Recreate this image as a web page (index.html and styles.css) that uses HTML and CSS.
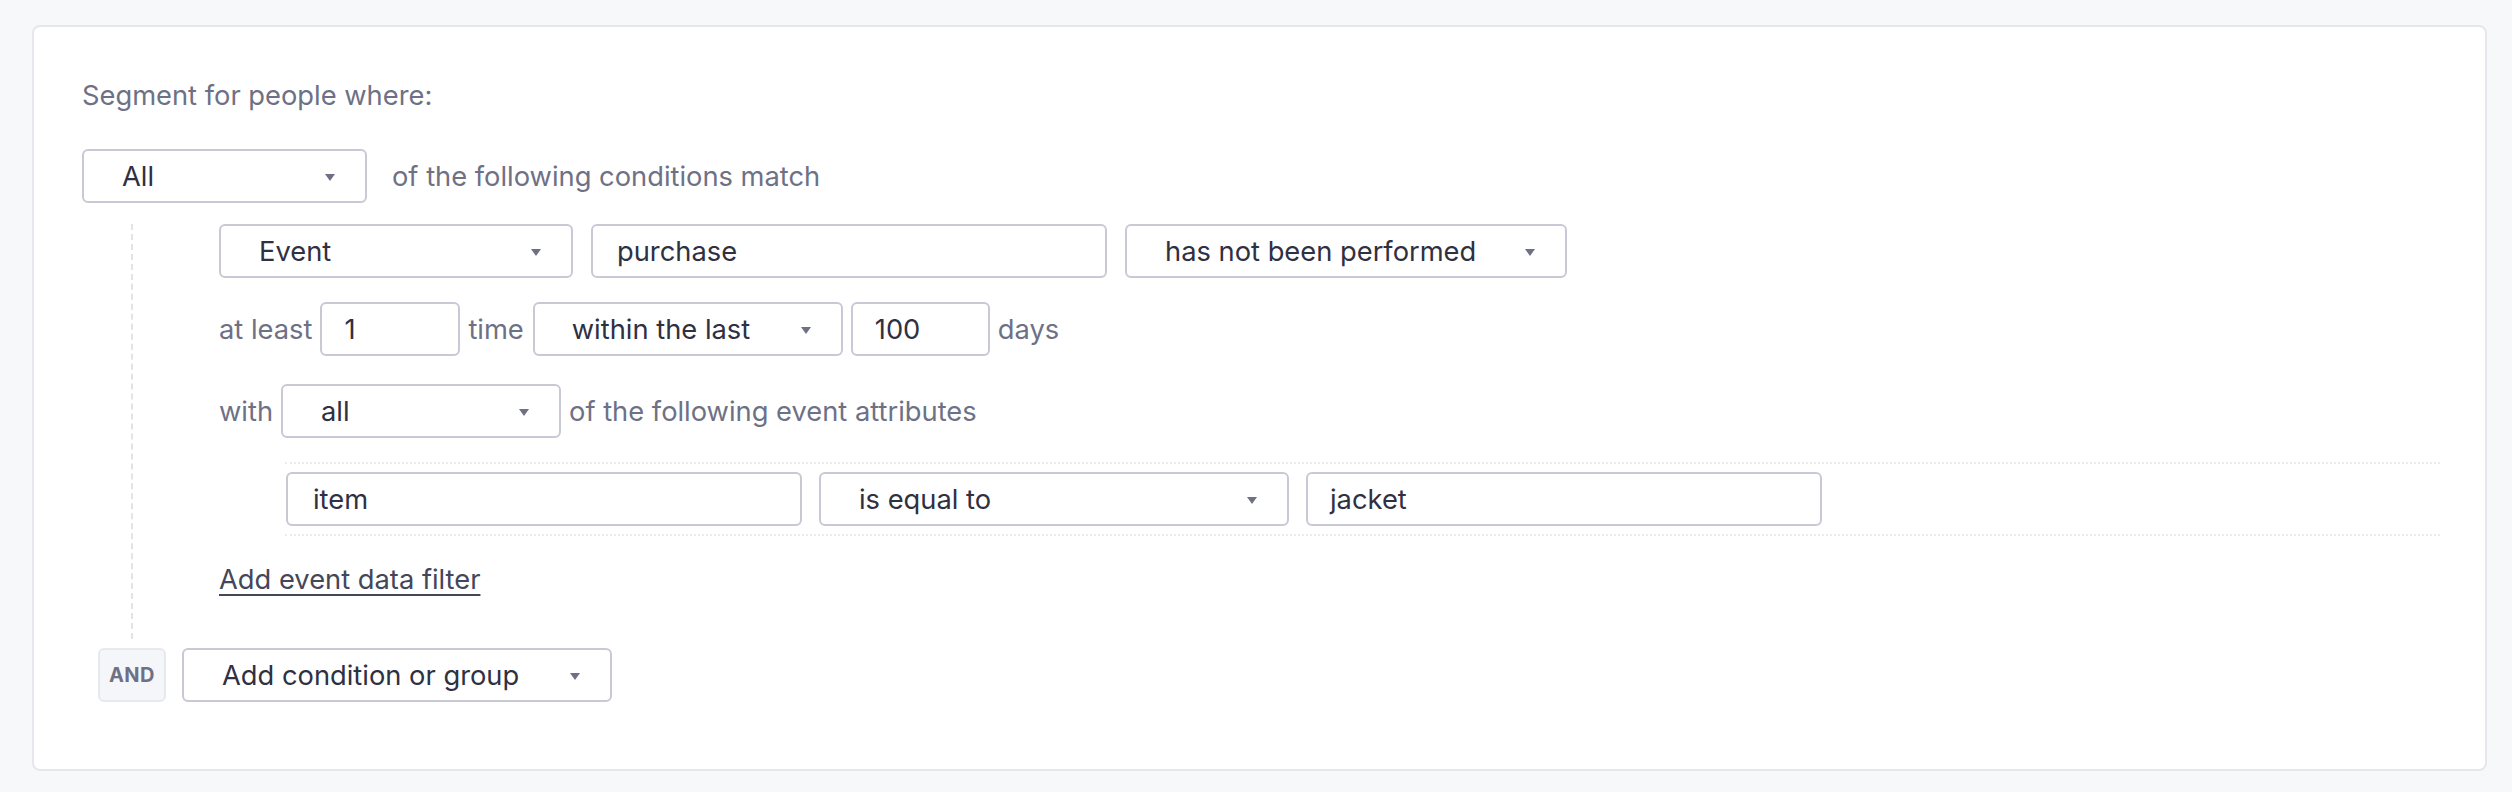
FILE: index.html
```html
<!DOCTYPE html>
<html>
<head>
<meta charset="utf-8">
<link rel="stylesheet" href="styles.css">
</head>
<body>
<div class="card">
  <div class="title">Segment for people where:</div>
  <div class="row top-row">
    <div class="select w-all"><span>All</span><i class="caret"></i></div>
    <span class="label gap-wide">of the following conditions match</span>
  </div>
  <div class="group">
    <div class="row r-event">
      <div class="select w-event"><span>Event</span><i class="caret"></i></div>
      <div class="input w-purchase">purchase</div>
      <div class="select w-performed"><span>has not been performed</span><i class="caret"></i></div>
    </div>
    <div class="row r-least">
      <span class="label">at least</span>
      <div class="input w-one">1</div>
      <span class="label">time</span>
      <div class="select w-within"><span>within the last</span><i class="caret"></i></div>
      <div class="input w-hundred">100</div>
      <span class="label">days</span>
    </div>
    <div class="row r-with">
      <span class="label">with</span>
      <div class="select w-allattr"><span>all</span><i class="caret"></i></div>
      <span class="label">of the following event attributes</span>
    </div>
    <div class="filters">
      <div class="row r-filter">
        <div class="input w-item">item</div>
        <div class="select w-equal"><span>is equal to</span><i class="caret"></i></div>
        <div class="input w-jacket">jacket</div>
      </div>
    </div>
    <div class="link-row"><a class="link">Add event data filter</a></div>
  </div>
  <div class="row and-row">
    <div class="badge">AND</div>
    <div class="select w-add"><span>Add condition or group</span><i class="caret"></i></div>
  </div>
</div>
</body>
</html>
```

FILE: styles.css
```css
html, body {
  margin: 0;
  padding: 0;
}
body {
  background: #f7f8fa;
  padding: 25px 25px 21px 32px;
  font-family: Inter, "Noto Sans", sans-serif;
  font-size: 27.3px;
  color: #2f3042;
  box-sizing: border-box;
  height: 792px;
}
.card {
  background: #ffffff;
  border: 2px solid #e6e7ec;
  border-radius: 8px;
  height: 100%;
  box-sizing: border-box;
  padding: 53px 45px 0 48px;
}
.title {
  color: #6e7185;
  line-height: 32px;
  height: 32px;
}
.row {
  display: flex;
  align-items: center;
}
.top-row {
  margin-top: 37px;
}
.label {
  color: #6e7185;
  white-space: nowrap;
}
.gap-wide {
  margin-left: 25px;
}
.select, .input {
  box-sizing: border-box;
  height: 54px;
  border: 2px solid #c9c9d6;
  border-radius: 6px;
  background: #fff;
  display: flex;
  align-items: center;
  white-space: nowrap;
  color: #2f3042;
}
.select {
  justify-content: space-between;
  padding: 0 30px 0 38px;
}
.input {
  padding: 0 22px;
}
.caret {
  width: 0;
  height: 0;
  border-left: 5px solid transparent;
  border-right: 5px solid transparent;
  border-top: 7px solid #6e7185;
  margin-top: 2px;
}
.w-all { width: 285px; }
.group {
  margin-left: 49px;
  margin-top: 21px;
  border-left: 2px dashed #e2e3e8;
  padding-left: 86px;
  padding-bottom: 43px;
}
.r-event .select + .input,
.r-event .input + .select {
  margin-left: 18px;
}
.w-event { width: 354px; }
.w-purchase { width: 516px; padding-left: 24px; }
.w-performed { width: 442px; }
.r-least {
  margin-top: 24px;
  gap: 8px;
}
.w-one { width: 140px; }
.w-within { width: 310px; margin-left: 1px; padding-left: 37px; }
.w-hundred { width: 139px; }
.r-with {
  margin-top: 28px;
  gap: 8px;
}
.w-allattr { width: 280px; }
.filters {
  margin-top: 24px;
  margin-left: 66px;
  border-top: 2px dotted #ebebef;
  border-bottom: 2px dotted #ebebef;
  padding: 8px 0;
}
.r-filter {
  gap: 17px;
  padding-left: 1px;
}
.w-item { width: 516px; padding-left: 25px; }
.w-equal { width: 470px; }
.w-jacket { width: 516px; }
.link-row {
  margin-top: 28px;
  line-height: 32px;
}
.link {
  color: #44465a;
  text-decoration: underline;
  text-underline-offset: 5px;
  text-decoration-thickness: 2px;
}
.and-row {
  margin-top: 9px;
  margin-left: 16px;
  gap: 16px;
}
.badge {
  box-sizing: border-box;
  width: 68px;
  height: 54px;
  border: 2px solid #e8e9ee;
  border-radius: 6px;
  background: #f5f6f9;
  color: #6e7185;
  font-size: 20px;
  font-weight: 700;
  letter-spacing: 0.5px;
  display: flex;
  align-items: center;
  justify-content: center;
}
.w-add { width: 430px; }
```
